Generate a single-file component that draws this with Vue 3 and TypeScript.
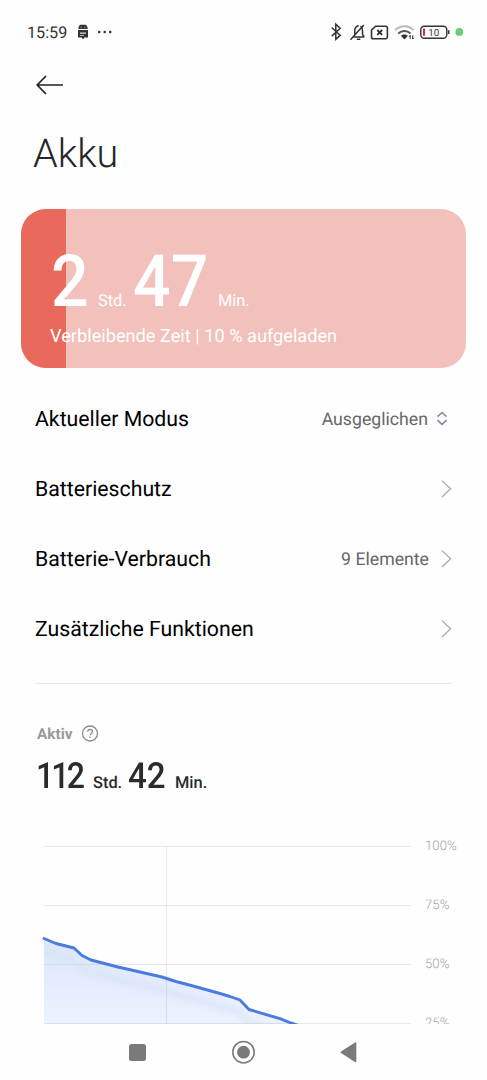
<script setup lang="ts">
interface SettingRow {
  title: string
  value?: string
  kind: 'select' | 'link'
}

const rows: SettingRow[] = [
  { title: 'Aktueller Modus', value: 'Ausgeglichen', kind: 'select' },
  { title: 'Batterieschutz', kind: 'link' },
  { title: 'Batterie-Verbrauch', value: '9 Elemente', kind: 'link' },
  { title: 'Zusätzliche Funktionen', kind: 'link' },
]

const charge = 10
const levels: string[] = ['100%', '75%', '50%', '25%']
const curve =
  '44,108.5 56,113.5 74,118 82,125.5 91,130 118,137 140,142 162,147 176,151.5 193,156 220,163.5 230,166.5 240,170 249,179.5 280,188.7 291,193 300,196'
</script>

<template>
  <div class="screen">
    <header class="status">
      <span class="clock">15:59</span>
      <svg class="robot" width="12" height="16" viewBox="0 0 12 16">
        <path d="M1.300 5C1.300 2.800 2.400 1.200 3.400.8h5.200c1 .4 2.100 2 2.100 4.200z" fill="#333" />
        <path d="M3.600 3.300h1M7.400 3.300h1" stroke="#ccc" stroke-width=".9" />
        <path d="M1 6h10v7.600H7.300L6 15.400 4.700 13.600H1z" fill="#333" />
        <path d="M3 8.600h6v1.100H3zM3 10.900h4v.9H3z" fill="#ddd" />
      </svg>
      <svg class="dots" width="16" height="4" viewBox="0 0 16 4" fill="#333">
        <circle cx="2.200" cy="2" r="1.300" /><circle cx="7.700" cy="2" r="1.300" /><circle cx="13.200" cy="2" r="1.300" />
      </svg>
      <svg class="tray" width="136" height="20" viewBox="0 0 136 20" fill="none" stroke="#333" stroke-width="1.600">
        <path d="M1.800 5.500l8.400 7.900-4.400 4V2.200l4.400 4-8.400 7.900" stroke-width="1.500" />
        <path d="M22.500 15h11.800M24.800 13V8.500c0-2.800 1.500-4.500 3.900-4.800M30.500 4.100c1.400.8 2 2.300 2 4.400v4l1.800 2.200M26.800 17.300h3.500M20.500 17.800L33.800 3" stroke-width="1.500" />
        <path d="M45.600 4.200h10a1.800 1.800 0 0 1 1.800 1.800v9a1.800 1.800 0 0 1-1.800 1.800H43.300a1.800 1.800 0 0 1-1.800-1.800V8.200z" />
        <path d="M47.300 8l4.800 4.800M52.100 8l-4.800 4.800" stroke-width="1.900" />
        <path d="M65.200 8c5.200-5.100 13.200-5.100 18.400 0" stroke="#bbb" stroke-width="2" />
        <path d="M68.300 11.500c3.500-3.300 8.700-3.300 12.200 0" stroke="#555" stroke-width="2" />
        <path d="M70.900 13.800c2-1.900 5-1.900 7 0L74.400 17.600z" fill="#333" stroke="none" />
        <path d="M80.200 13.300v3.800M82.700 13.300v3.800M79 14.800l1.200-1.500M82.700 17.100l1.200-1.500" stroke-width="1" />
        <rect x="90.800" y="4.200" width="26" height="12" rx="3.500" stroke-width="1.400" />
        <path d="M118.700 8.200v3.800" stroke-width="1.600" />
        <path d="M94 6.600v7.200" stroke="#d32f3f" stroke-width="2" />
        <circle cx="129.300" cy="9.900" r="3.900" fill="#67cf75" stroke="none" />
        <text class="level" x="98.300" y="13.700">10</text>
      </svg>
    </header>

    <svg class="back" width="28" height="20" viewBox="0 0 28 20" fill="none" stroke="#222" stroke-width="1.700">
      <path d="M11 1L2.200 10l8.800 9M2.200 10h26" />
    </svg>
    <h1>Akku</h1>

    <section class="card">
      <div class="fill" :style="{ width: charge + '%' }"></div>
      <div class="info">
        <div class="remaining">
          <b class="hours">2</b><span class="std">Std.</span><b class="minutes">47</b><span class="min">Min.</span>
        </div>
        <p>Verbleibende Zeit | {{ charge }} % aufgeladen</p>
      </div>
    </section>

    <ul class="rows">
      <li v-for="row in rows" :key="row.title">
        <span class="title">{{ row.title }}</span>
        <span v-if="row.value" class="value" :class="row.kind">{{ row.value }}</span>
        <svg v-if="row.kind === 'select'" class="updown" width="12" height="16" viewBox="0 0 12 16" fill="none" stroke="#8588a4" stroke-width="1.600">
          <path d="M1.500 5.700L6 1.500l4.500 4.200M1.500 9.200L6 13.400l4.500-4.200" />
        </svg>
        <svg v-else class="chevron" width="11" height="18" viewBox="0 0 11 18" fill="none" stroke="#aaa" stroke-width="1.300">
          <path d="M1 .6l8.600 8.200L1 17" />
        </svg>
      </li>
    </ul>

    <section class="active">
      <div class="caption">
        <span>Aktiv</span>
        <svg width="18" height="18" viewBox="0 0 18 18" fill="none" stroke="#8c8c8c" stroke-width="1.300">
          <circle cx="9" cy="8.500" r="7.500" />
          <path d="M6.700 6.800c0-3.300 4.800-3.100 4.800-.2 0 1.800-2.400 1.800-2.400 3.700M9.100 11.500v1.400" />
        </svg>
      </div>
      <div class="total">
        <b class="th">112</b><span class="ts">Std.</span><b class="tm">42</b><span class="tn">Min.</span>
      </div>
    </section>

    <section class="chart">
      <svg width="415" height="194" viewBox="0 0 415 194">
        <defs>
          <linearGradient id="area" x1="0" y1="108" x2="0" y2="195" gradientUnits="userSpaceOnUse">
            <stop offset="0" stop-color="#dbe6fa" />
            <stop offset="1" stop-color="#edf2ff" />
          </linearGradient>
          <clipPath id="under"><polygon :points="curve + ' 44,196'" /></clipPath>
          <filter id="soft" x="-10%" y="-20%" width="120%" height="150%"><feGaussianBlur stdDeviation="3" /></filter>
        </defs>
        <polygon :points="curve + ' 44,196'" fill="url(#area)" />
        <g clip-path="url(#under)">
          <polyline :points="curve" transform="translate(0 13)" fill="none" stroke="#cfdff3" stroke-opacity=".65" stroke-width="5" filter="url(#soft)" />
        </g>
        <path d="M44 16.500h367M44 75.500h367M44 134.500h367M44 193.500h367" stroke="#b8c0c4" stroke-opacity=".34" />
        <path d="M166.500 17v177" stroke="#a5b0bd" stroke-opacity=".28" />
        <polyline :points="curve" fill="none" stroke="#4a7cdf" stroke-width="2.900" stroke-linejoin="round" stroke-linecap="round" />
      </svg>
      <div class="labels"><span v-for="l in levels" :key="l">{{ l }}</span></div>
    </section>

    <nav>
      <svg width="487" height="55" viewBox="0 0 487 55" fill="#7a7a7a">
        <rect x="129" y="19" width="17" height="17" rx="2.500" />
        <circle cx="243.500" cy="27.200" r="10.700" fill="none" stroke="#7a7a7a" stroke-width="1.500" />
        <circle cx="243.500" cy="27.200" r="6.400" />
        <path d="M341 26.400q-1 .8 0 1.600l14 9q1.300.7 1.300-.8v-18q0-1.500-1.300-.8z" />
      </svg>
    </nav>
  </div>
</template>

<style>
body { background: #fefefe; }
</style>

<style scoped>
.screen {
  width: 487px;
  height: 1080px;
  overflow: hidden;
  background: #fefefe;
  color: #000;
  font-family: Roboto, "Liberation Sans", sans-serif;
  display: flex;
  flex-direction: column;
  text-rendering: geometricPrecision;
}
svg { display: block; flex: none; }
.status { height: 64px; flex: none; display: flex; align-items: center; padding: 0 21px 0 27px; color: #333; }
.clock { font-size: 16.2px; width: 50px; }
.dots { margin-left: 8px; margin-bottom: 1px; }
.tray { margin-left: auto; }
.level { font-size: 9.8px; fill: #333; stroke: none; }
.back { margin: 11px 0 0 35px; }
h1 { margin: 35px 0 0 33px; font-size: 39.6px; line-height: 48px; font-weight: 300; color: #252525; }
.card { position: relative; flex: none; width: 445px; height: 159px; margin: 31px 0 0 21px; border-radius: 25px; overflow: hidden; background: #f3c1bc; color: #fff; }
.fill { position: absolute; inset: 0 auto 0 0; background: #ea695d; }
.info { position: relative; padding: 31px 0 0 29px; }
.remaining { display: flex; align-items: baseline; height: 84px; line-height: 84px; font-size: 16.4px; }
.remaining b { font-size: 72px; font-weight: 500; display: block; transform: scaleX(.92); transform-origin: 0 0; }
.remaining .hours { width: 40px; margin-left: 1px; }
.std { width: 29px; margin-left: 7px; }
.minutes { width: 76px; margin-left: 6px; }
.min { margin-left: 9px; }
.info p { margin: 1px 0 0; font-size: 18.2px; line-height: 24px; }
.rows { list-style: none; margin: 16px 35px 0; padding: 0 0 19px; border-bottom: 1px solid #e8e8e8; }
.rows li { display: flex; height: 70px; align-items: center; }
.title { font-size: 21.25px; flex: 1; }
.value { font-size: 17.7px; color: #666; margin-right: 12px; padding-top: 2px; }
.value.select { margin-right: 8px; }
.updown { margin-right: 4px; }
.active { padding: 40px 0 0 37px; }
.caption { display: flex; align-items: center; height: 20px; font-size: 15.3px; font-weight: 700; color: #999; }
.caption svg { margin-left: 9px; }
.total { display: flex; align-items: baseline; height: 44px; line-height: 44px; margin-top: 10px; color: #2b2b2b; font-size: 16.4px; font-weight: 500; }
.total b { font-size: 36px; font-weight: 500; display: block; transform: scaleX(.92); transform-origin: 0 0; }
.total .th { width: 48px; letter-spacing: -3.2px; margin-left: -1px; transform: scaleX(.89); }
.ts { width: 29px; margin-left: 9px; }
.tm { width: 38px; margin-left: 6px; }
.tn { margin-left: 9px; }
.chart { height: 194px; margin-top: 32px; flex: none; display: flex; overflow: hidden; }
.labels { margin-left: 10px; padding-top: 7px; font-size: 13.2px; color: #a4a4a4; font-weight: 300; }
.labels span { display: block; height: 59px; line-height: 20px; }
nav { height: 55px; margin-top: auto; background: #fefefe; }
</style>
